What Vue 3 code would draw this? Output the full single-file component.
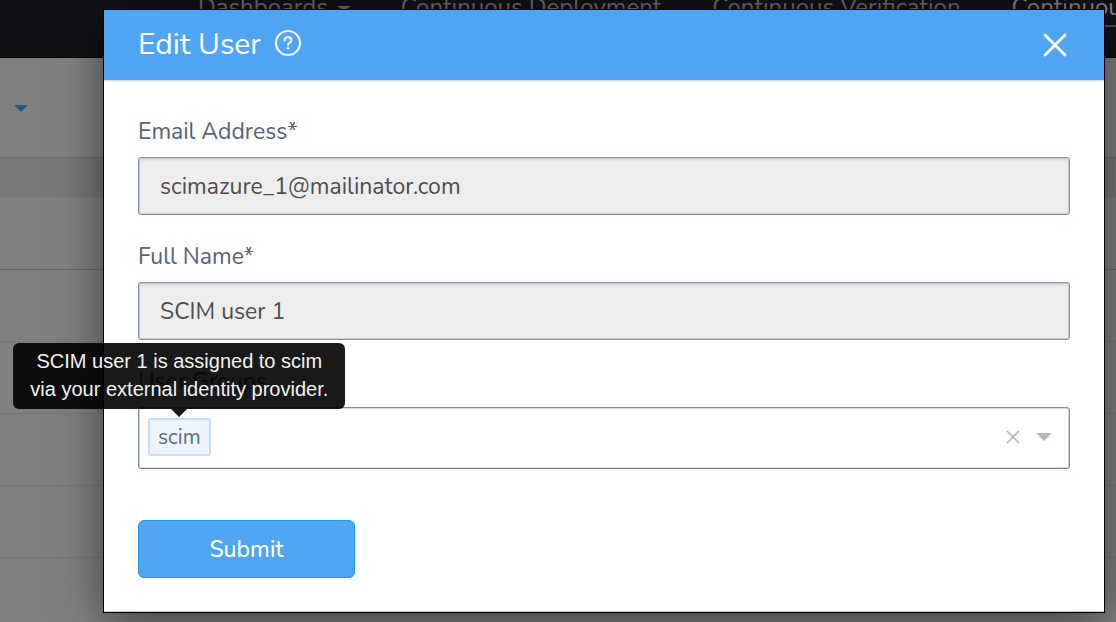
<script setup>
import { ref } from 'vue'

const nav = ['Dashboards', 'Continuous Deployment', 'Continuous Verification', 'Continuous Efficiency']
const email = ref('scimazure_1@mailinator.com')
const fullName = ref('SCIM user 1')
const groups = ref(['scim'])
const rows = [1, 2, 3, 4, 5]
</script>

<template>
  <div class="app">
    <div class="page" aria-hidden="true">
      <nav class="topbar">
        <span v-for="(item, i) in nav" :key="item" class="tab" :class="{ active: i === 3 }">
          {{ item }}
          <svg v-if="i === 0" class="tab-caret" viewBox="0 0 12 6"><path d="M0 0h12L6 6z" /></svg>
        </span>
      </nav>
      <div class="toolbar">
        <svg class="filter-caret" viewBox="0 0 14 7"><path d="M0 0h14L7 7z" /></svg>
      </div>
      <div class="band"></div>
      <div class="list-head"></div>
      <div v-for="r in rows" :key="r" class="list-row"></div>
    </div>

    <div class="overlay">
      <section class="dialog" role="dialog" aria-labelledby="dialog-title">
        <header class="dialog-head">
          <h1 id="dialog-title">Edit User</h1>
          <button class="icon-btn help" type="button" aria-label="Help">
            <svg viewBox="0 0 28 28">
              <circle cx="14" cy="14" r="12" />
              <path class="mark" d="M10.6 11.4c0-2 1.5-3.2 3.4-3.2s3.4 1.2 3.4 3c0 2.5-3.3 2.5-3.3 5" />
              <circle class="dot" cx="14.1" cy="19.3" r="1.3" />
            </svg>
          </button>
          <button class="icon-btn close" type="button" aria-label="Close">
            <svg viewBox="0 0 24 24"><path d="M2 2l20 20M22 2L2 22" /></svg>
          </button>
        </header>

        <form class="dialog-body" @submit.prevent>
          <div class="field">
            <label for="email">Email Address*</label>
            <input id="email" v-model="email" class="text" type="text" disabled>
          </div>
          <div class="field">
            <label for="name">Full Name*</label>
            <input id="name" v-model="fullName" class="text" type="text" disabled>
          </div>
          <div class="field">
            <label for="groups">User Groups</label>
            <div class="multi">
              <span v-for="g in groups" :key="g" class="chip">
                {{ g }}
                <span class="tooltip" role="tooltip">{{ fullName }} is assigned to {{ g }}<br>via your external identity provider.</span>
              </span>
              <input id="groups" class="search" type="text" role="combobox" aria-expanded="false">
              <button class="icon-btn clear" type="button" aria-label="Clear">
                <svg viewBox="0 0 14 14"><path d="M1 1l12 12M13 1L1 13" /></svg>
              </button>
              <button class="icon-btn open" type="button" aria-label="Open">
                <svg viewBox="0 0 16 8"><path d="M0 0h16L8 8z" /></svg>
              </button>
            </div>
          </div>
          <button class="submit" type="submit">Submit</button>
        </form>
      </section>
    </div>
  </div>
</template>

<style>
body {
  background: #808080;
}
</style>

<style scoped>
.app {
  position: relative;
  min-height: 100vh;
  overflow: hidden;
  font-family: Nunito, "Open Sans", "Noto Sans", sans-serif;
  box-sizing: border-box;
}
.app *,
.app *::before {
  box-sizing: border-box;
}
.page {
  position: absolute;
  inset: 0;
  overflow: hidden;
}
.topbar {
  display: flex;
  align-items: flex-start;
  gap: 51px;
  height: 58px;
  padding-left: 198px;
  background: #111216;
  border-bottom: 1px solid #050506;
  overflow: hidden;
}
.tab {
  flex: none;
  display: flex;
  align-items: flex-start;
  gap: 10px;
  height: 27px;
  margin-top: -7px;
  padding: 0;
  font-size: 24px;
  line-height: 28px;
  color: #6c6c6c;
  white-space: nowrap;
}
.tab.active {
  height: 34px;
  color: #848484;
  border-bottom: 2px solid #28537a;
}
.tab-caret {
  width: 12px;
  height: 6px;
  margin-top: 13px;
  fill: #6c6c6c;
}
.toolbar {
  display: flex;
  align-items: center;
  height: 99px;
  padding: 2px 0 0 14px;
}
.filter-caret {
  width: 14px;
  height: 7px;
  fill: #285a87;
}
.band {
  height: 41px;
  background: #767879;
  border-top: 1px solid #6c6c6c;
}
.list-head {
  height: 72px;
  border-bottom: 1px solid #686868;
}
.list-row {
  height: 72px;
  border-bottom: 1px solid #777;
}
.overlay {
  position: relative;
  padding: 10px 12px 10px 104px;
}
.dialog {
  background: #fff;
  border-bottom: 1px solid #c9cdc9;
  box-shadow: 0 0 0 1px #000, 0 8px 44px rgba(0, 0, 0, 0.55);
}
.dialog-head {
  position: relative;
  display: flex;
  align-items: center;
  height: 70px;
  padding: 0 34px;
  background: #4fa5f1;
  box-shadow: 0 1px 2px rgba(0, 0, 0, 0.2);
  color: #fff;
}
h1 {
  margin: 0;
  font-size: 30px;
  line-height: 40px;
  font-weight: 400;
}
.icon-btn {
  display: block;
  padding: 0;
  border: 0;
  background: none;
}
.icon-btn svg {
  display: block;
  width: 100%;
}
.help {
  width: 28px;
  margin-left: 13px;
  margin-bottom: 4px;
}
.help svg {
  fill: none;
  stroke: #edf2f7;
  stroke-width: 2.2;
  stroke-linecap: round;
}
.help .dot {
  fill: #edf2f7;
  stroke: none;
}
.close {
  width: 24px;
  margin-left: auto;
  margin-right: 3px;
}
.close svg {
  stroke: #fff;
  stroke-width: 2.8;
  stroke-linecap: round;
}
.dialog-body {
  padding: 37px 34px 33px;
}
.field {
  margin-bottom: 27px;
}
label {
  display: block;
  margin-bottom: 10px;
  font-size: 23px;
  line-height: 30px;
  color: #52647a;
}
.text {
  display: block;
  width: 100%;
  height: 58px;
  padding: 0 21px;
  border: 1px solid #8492aa;
  border-radius: 3px;
  background: #ededed;
  box-shadow: inset 0 0 0 1px #c5cad3, inset 0 3px 2px rgba(0, 0, 0, 0.05);
  font-family: inherit;
  font-size: 23px;
  color: #4d4d4d;
}
.multi {
  display: flex;
  align-items: center;
  height: 62px;
  padding: 0 17px 2px 9px;
  border: 1px solid #7988a3;
  border-radius: 3px;
  box-shadow: inset 0 0 0 1px #d0d5de;
}
.chip {
  position: relative;
  padding: 0 8px;
  border: 2px solid #c6defb;
  border-radius: 3px;
  background: #edf4fe;
  font-size: 21px;
  line-height: 34px;
  color: #5c6c80;
}
.tooltip {
  position: absolute;
  bottom: calc(100% + 11px);
  left: 50%;
  transform: translateX(-50%);
  padding: 4px 17px 6px;
  border-radius: 6px;
  background: rgba(0, 0, 0, 0.9);
  font-family: "Liberation Sans", Arial, sans-serif;
  font-size: 20px;
  line-height: 28px;
  color: #f2f2f2;
  text-align: center;
  white-space: nowrap;
}
.tooltip::before {
  content: "";
  position: absolute;
  top: 100%;
  left: 50%;
  margin-left: -8px;
  border: 8px solid transparent;
  border-top-color: rgba(0, 0, 0, 0.9);
  border-bottom: 0;
}
.search {
  flex: 1;
  min-width: 0;
  height: 38px;
  border: 0;
  outline: 0;
  background: none;
  font-family: inherit;
  font-size: 21px;
}
.clear {
  width: 14px;
}
.clear svg {
  stroke: #b0b8c5;
  stroke-width: 1.6;
}
.open {
  width: 16px;
  margin-left: 16px;
}
.open svg {
  fill: #b0b8c5;
}
.submit {
  display: block;
  width: 217px;
  height: 58px;
  margin-top: 51px;
  border: 1px solid #1e9af0;
  border-radius: 6px;
  background: #4fa5f1;
  font-family: inherit;
  font-size: 23px;
  font-weight: 500;
  color: #fff;
}
</style>
